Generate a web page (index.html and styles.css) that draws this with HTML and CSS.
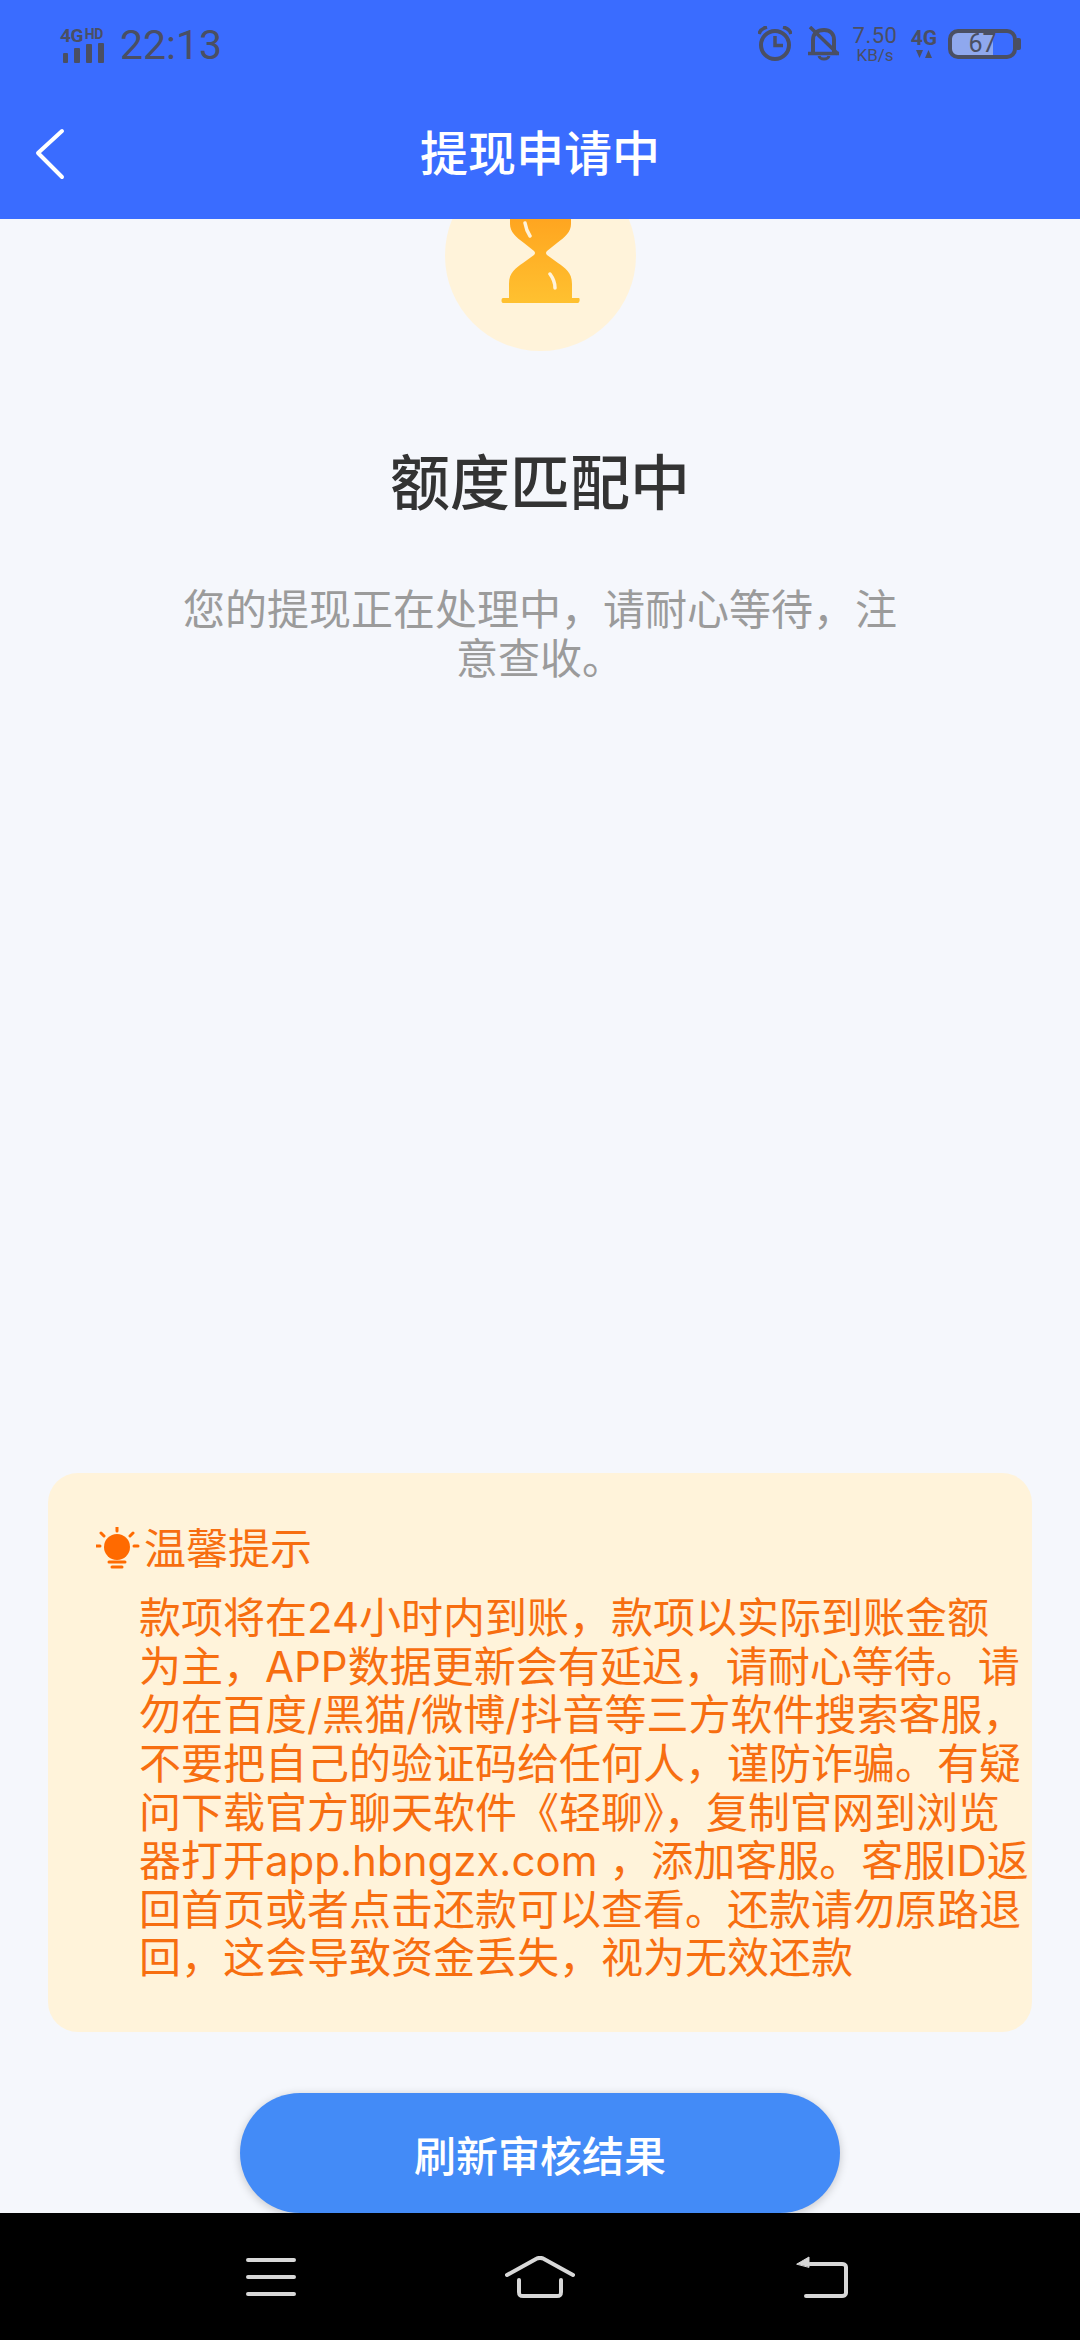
FILE: index.html
```html
<!DOCTYPE html>
<html lang="zh-CN">
<head>
    <meta charset="UTF-8">
    <meta name="viewport" content="width=device-width, initial-scale=1.0">
    <title>提现申请中</title>
    <link rel="stylesheet" href="styles.css">
</head>
<body>
    <header class="header">
        <div class="status-bar">
            <div class="status-left">
                <div class="signal">
                    <div class="signal-label">4G<span class="signal-hd">HD</span></div>
                    <svg class="signal-bars" width="45" height="20" viewBox="0 0 45 20">
                        <rect x="3" y="10" width="5" height="10" rx="1"/>
                        <rect x="14" y="5" width="6" height="15" rx="1"/>
                        <rect x="26" y="1" width="6" height="19" rx="1"/>
                        <rect x="38" y="0" width="6" height="20" rx="1"/>
                    </svg>
                </div>
                <span class="time">22:13</span>
            </div>
            <div class="status-right">
                <svg class="alarm" width="34" height="36" viewBox="0 0 34 36" fill="none" stroke="#4a4f63">
                    <circle cx="17" cy="19" r="14" stroke-width="4"/>
                    <path d="M17 10V19.500H25" stroke-width="3.500"/>
                    <path d="M1 8C2 4 5 2 9 1M33 8C32 4 29 2 25 1" stroke-width="3.500"/>
                </svg>
                <svg class="bell" width="32" height="36" viewBox="0 0 32 36" fill="none" stroke="#4a4f63" stroke-width="4">
                    <path d="M5 27V14C5 8 9 4 16 4C22 4 26 8 26 14V27"/>
                    <path d="M0 27.500H31" stroke-width="3.500"/>
                    <path d="M11 30C12 34 20 34 21 30" stroke-width="3"/>
                    <path d="M2 1L30 28" stroke-width="3.500"/>
                </svg>
                <div class="speed">
                    <span class="speed-num">7.50</span>
                    <span class="speed-unit">KB/s</span>
                </div>
                <div class="net">
                    <span class="net-label">4G</span>
                    <svg width="16" height="9" viewBox="0 0 16 9" fill="#4a4f63">
                        <path d="M0 0H7L3.500 8Z"/>
                        <path d="M9 8H16L12.500 0Z"/>
                    </svg>
                </div>
                <div class="battery">
                    <div class="battery-body">67</div>
                    <div class="battery-nub"></div>
                </div>
            </div>
        </div>
        <div class="title-bar">
            <svg class="back" width="30" height="52" viewBox="0 0 30 52" fill="none" stroke="#fff" stroke-width="4" stroke-linecap="round" stroke-linejoin="round">
                <path d="M27 3L3 25L27 49"/>
            </svg>
            <h1 class="page-title">提现申请中</h1>
        </div>
    </header>

    <main class="content">
        <div class="hourglass-circle">
            <svg width="191" height="191" viewBox="0 0 191 191">
                <defs>
                    <linearGradient id="sand" x1="0" y1="0" x2="0" y2="1">
                        <stop offset="0" stop-color="#ff9f1c"/>
                        <stop offset="1" stop-color="#ffc130"/>
                    </linearGradient>
                </defs>
                <path fill="url(#sand)" d="M65 40H126V64C126 72 120 77 112 83L102 91Q100 93 102 95L113 103C120 108 127 112 127 124V138H134C135 138 135 143 133 143H58C56 143 56 138 58 138H64V124C64 112 71 108 78 103L89 95Q91 93 89 91L79 83C71 77 65 72 65 64Z"/>
                <path d="M80 63C81 69 83 73 85 76M105 114C108 118 110 123 110 128" fill="none" stroke="#fff3da" stroke-width="3.500" stroke-linecap="round"/>
            </svg>
        </div>
        <h2 class="state-title">额度匹配中</h2>
        <p class="state-desc">您的提现正在处理中，请耐心等待，注意查收。</p>

        <section class="tips">
            <div class="tips-head">
                <svg width="44" height="44" viewBox="0 0 44 44" fill="none" stroke="#ff6a00">
                    <circle cx="21" cy="20" r="13" fill="#ff6a00" stroke="none"/>
                    <path d="M21 0V4M5 6L8 9M37 6L34 9M0 19H4M38 19H42" stroke-width="3" stroke-linecap="round"/>
                    <path d="M13 35H29M16 40H26" stroke-width="3" stroke-linecap="round"/>
                </svg>
                <span>温馨提示</span>
            </div>
            <p class="tips-body">款项将在24小时内到账，款项以实际到账金额为主，APP数据更新会有延迟，请耐心等待。请勿在百度/黑猫/微博/抖音等三方软件搜索客服，不要把自己的验证码给任何人，谨防诈骗。有疑问下载官方聊天软件《轻聊》，复制官网到浏览器打开app.hbngzx.com ，添加客服。客服ID返回首页或者点击还款可以查看。还款请勿原路退回，这会导致资金丢失，视为无效还款</p>
        </section>

        <button type="button" class="refresh-btn">刷新审核结果</button>
    </main>

    <nav class="nav-bar">
        <svg width="50" height="38" viewBox="0 0 50 38" fill="none" stroke="#d8d8d8" stroke-width="4" stroke-linecap="round">
            <path d="M2 2H48M2 19H48M2 36H48"/>
        </svg>
        <svg class="nav-home" width="70" height="42" viewBox="0 0 70 42" fill="none" stroke="#d8d8d8" stroke-width="4" stroke-linecap="round" stroke-linejoin="round">
            <path d="M2 19L31 3C33 1.500 37 1.500 39 3L68 19"/>
            <path d="M14 24V36C14 39 15 40 18 40H52C55 40 56 39 56 36V24"/>
        </svg>
        <svg width="52" height="42" viewBox="0 0 52 42" fill="none" stroke="#d8d8d8" stroke-width="4" stroke-linecap="round" stroke-linejoin="round">
            <path d="M14 8H46C48 8 50 9 50 11V37C50 39 48 40 46 40H10"/>
            <path d="M1 8L13 1V11Z" fill="#d8d8d8" stroke-width="1"/>
        </svg>
    </nav>
</body>
</html>
```

FILE: styles.css
```css
* {
    box-sizing: border-box;
}
body {
    margin: 0;
    width: 1080px;
    height: 2340px;
    display: flex;
    flex-direction: column;
    overflow: hidden;
    background-color: #f5f7fc;
    font-family: Roboto, "Noto Sans CJK SC", sans-serif;
}
.header {
    height: 219px;
    background-color: #3a6cff;
    flex-shrink: 0;
    position: relative;
    z-index: 1;
}
.status-bar {
    height: 88px;
    display: flex;
    justify-content: space-between;
    align-items: center;
    padding: 0 59px 0 60px;
    color: #4a4f63;
}
.status-left {
    display: flex;
    align-items: center;
    gap: 15px;
}
.signal {
    width: 45px;
    display: flex;
    flex-direction: column;
    margin-top: 2px;
}
.signal-label {
    font-size: 19px;
    font-weight: 700;
    line-height: 14px;
    letter-spacing: -0.5px;
}
.signal-hd {
    font-size: 14px;
    margin-left: 2px;
    vertical-align: 3px;
}
.signal-bars {
    fill: #4a4f63;
}
.time {
    font-size: 41px;
    font-weight: 400;
    line-height: 48px;
    margin-top: 2px;
}
.status-right {
    display: flex;
    align-items: center;
}
.bell {
    margin-left: 16px;
}
.speed {
    width: 46px;
    margin-left: 12px;
    display: flex;
    flex-direction: column;
    align-items: center;
    line-height: 1;
}
.speed-num {
    font-size: 22px;
    letter-spacing: 0.5px;
}
.speed-unit {
    font-size: 17px;
}
.net {
    width: 24px;
    margin-left: 14px;
    display: flex;
    flex-direction: column;
    align-items: center;
    gap: 3px;
}
.net-label {
    font-size: 21px;
    font-weight: 700;
    line-height: 18px;
}
.battery {
    margin-left: 12px;
    display: flex;
    align-items: center;
}
.battery-body {
    width: 69px;
    height: 30px;
    border: 4px solid #4a4f63;
    border-radius: 10px;
    background: linear-gradient(90deg, #8fa8ee 67%, transparent 67%);
    font-size: 25px;
    line-height: 22px;
    text-align: center;
}
.battery-nub {
    width: 4px;
    height: 12px;
    background-color: #4a4f63;
    border-radius: 0 2px 2px 0;
}
.title-bar {
    height: 131px;
    display: grid;
    grid-template-columns: 1fr auto 1fr;
    align-items: center;
    padding: 0 35px;
}
.page-title {
    margin: 0 0 8px;
    font-size: 48px;
    font-weight: 500;
    color: #fff;
}
.content {
    flex: 1;
    min-height: 0;
    display: flex;
    flex-direction: column;
    align-items: center;
    overflow: hidden;
}
.hourglass-circle {
    width: 191px;
    height: 191px;
    margin-top: -59px;
    border-radius: 50%;
    background-color: #fff3da;
    flex-shrink: 0;
}
.state-title {
    margin: 94px 0 0;
    font-size: 60px;
    font-weight: 500;
    line-height: 80px;
    color: #333;
}
.state-desc {
    width: 720px;
    margin: 61px 0 0;
    font-size: 42px;
    line-height: 49px;
    color: #9b9b9b;
    text-align: center;
}
.tips {
    width: 984px;
    margin-top: auto;
    padding: 49px 2px 49px 48px;
    border-radius: 30px;
    background-color: #fff3da;
    color: #f76e10;
    font-family: Inter, "Noto Sans CJK SC", sans-serif;
    font-size: 42px;
}
.tips-head {
    height: 54px;
    display: flex;
    align-items: center;
    gap: 4px;
    line-height: 54px;
}
.tips-body {
    margin: 18px 0 0 43px;
    line-height: 48.6px;
}
.refresh-btn {
    width: 600px;
    height: 120px;
    margin-top: 61px;
    flex-shrink: 0;
    border: none;
    border-radius: 60px;
    background-color: #438bf7;
    box-shadow: 0 2px 10px rgba(0, 0, 0, 0.2);
    color: #fff;
    font-family: inherit;
    font-size: 42px;
    font-weight: 500;
}
.nav-bar {
    height: 127px;
    flex-shrink: 0;
    position: relative;
    background-color: #000;
    display: flex;
    justify-content: space-between;
    align-items: center;
    padding: 0 232px 0 246px;
}
.nav-home {
    margin-right: 12px;
}
```
